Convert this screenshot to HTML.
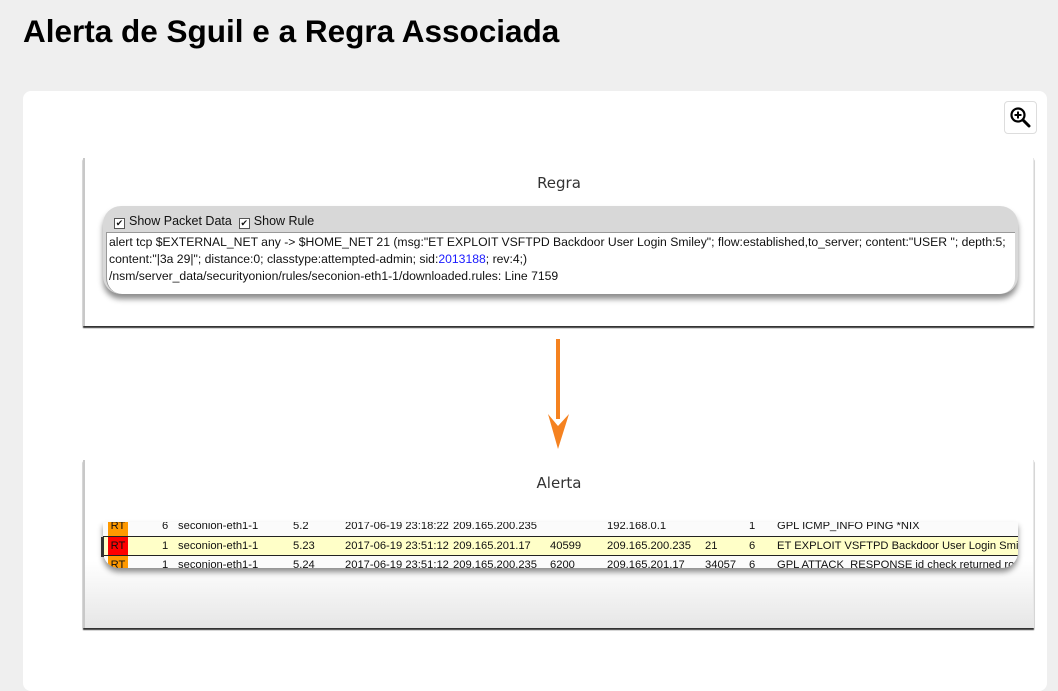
<!DOCTYPE html>
<html><head><meta charset="utf-8"><style>
body{margin:0;width:1058px;height:668px;background:#efefef;font-family:"Liberation Sans","DejaVu Sans",sans-serif;overflow:hidden;position:relative}
h1{position:absolute;left:23px;top:13px;margin:0;font-size:31.5px;font-weight:bold;color:#000}
.card{position:absolute;left:23px;top:91px;width:1024px;height:600px;background:#fff;border-radius:8px}
.zoom{position:absolute;left:1004px;top:101px;width:31px;height:31px;border:1px solid #ddd;border-radius:4px;background:#fff}
.panel{position:absolute;left:83px;width:948px;background:#fff;border-left:2px solid #c8c8c8;border-right:1px solid #e8e8e8;box-shadow:0 2px 1px #333}
.ttl{position:absolute;width:100%;text-align:center;font-family:"DejaVu Sans",sans-serif;font-size:15px;color:#333}
.sm{font-family:"Liberation Sans",sans-serif;font-size:12.2px;color:#111}
.rule{position:absolute;left:18px;top:48px;width:915px;height:88px;background:#d8d8d8;border-radius:18px;box-shadow:0 5px 6px rgba(0,0,0,.45)}
.rbox{position:absolute;left:3px;top:26px;right:3px;bottom:0;background:#fff;border-radius:0 0 16px 16px;border-top:1px solid #999;border-left:1px solid #999;padding:1px 0 0 2px;line-height:17px;white-space:nowrap;overflow:hidden}
.cb{display:inline-block;width:9px;height:9px;border:1px solid #555;background:#fff;font-size:9px;line-height:9px;text-align:center;vertical-align:-1px;margin-right:4px}
.tbl{position:absolute;left:18px;top:62px;width:915px;height:46px;overflow:hidden;border-radius:0 0 16px 16px;box-shadow:0 4px 6px rgba(0,0,0,.45);background:#fbfbfb}
.row{position:absolute;left:0;height:19px;width:100%;line-height:19px;white-space:nowrap;font-size:11.2px}
.row span{position:absolute}
</style></head><body>
<h1>Alerta de Sguil e a Regra Associada</h1>
<div class="card"></div>
<div class="zoom"><svg width="31" height="31" viewBox="0 0 31 31"><circle cx="13" cy="13" r="6.5" fill="none" stroke="#000" stroke-width="2.2"/><path d="M13 9.5v7M9.5 13h7" stroke="#000" stroke-width="2"/><path d="M18 18l6 6" stroke="#000" stroke-width="3" stroke-linecap="round"/></svg></div>

<div class="panel" style="top:158px;height:168px">
<div class="ttl" style="top:16px">Regra</div>
<div class="rule"><div class="sm" style="position:absolute;left:11px;top:8px;font-size:12.5px"><span class="cb">✔</span>Show Packet Data &nbsp;<span class="cb">✔</span>Show Rule</div>
<div class="rbox sm">alert tcp $EXTERNAL_NET any -&gt; $HOME_NET 21 (msg:"ET EXPLOIT VSFTPD Backdoor User Login Smiley"; flow:established,to_server; content:"USER "; depth:5;<br>content:"|3a 29|"; distance:0; classtype:attempted-admin; sid:<span style="color:#1a1aff">2013188</span>; rev:4;)<br>/nsm/server_data/securityonion/rules/seconion-eth1-1/downloaded.rules: Line 7159</div></div>
</div>

<svg style="position:absolute;left:545px;top:336px" width="30" height="115"><path d="M13 3v80" stroke="#f58220" stroke-width="4"/><path d="M3 78l10 35l11-35l-11 12z" fill="#f58220"/></svg>

<div class="panel" style="top:460px;height:168px;background:linear-gradient(#fff 60%,#e6e6e6)">
<div class="ttl" style="top:14px">Alerta</div>
<div class="tbl sm">
<div class="row" style="top:-5px"><span style="left:5px;width:20px;background:#f90;text-align:center">RT</span><span style="left:59px">6</span><span style="left:75px">seconion-eth1-1</span><span style="left:190px">5.2</span><span style="left:242px">2017-06-19 23:18:22</span><span style="left:350px">209.165.200.235</span><span style="left:504px">192.168.0.1</span><span style="left:646px">1</span><span style="left:674px">GPL ICMP_INFO PING *NIX</span></div>
<div class="row" style="top:14px;background:#ffffc8;border-top:1px solid #222;border-bottom:1px solid #222;height:18px;line-height:18px"><span style="left:5px;width:20px;background:#f00;text-align:center">RT</span><span style="left:59px">1</span><span style="left:75px">seconion-eth1-1</span><span style="left:190px">5.23</span><span style="left:242px">2017-06-19 23:51:12</span><span style="left:350px">209.165.201.17</span><span style="left:447px">40599</span><span style="left:504px">209.165.200.235</span><span style="left:602px">21</span><span style="left:646px">6</span><span style="left:674px">ET EXPLOIT VSFTPD Backdoor User Login Smiley</span></div>
<div class="row" style="top:34px"><span style="left:5px;width:20px;background:#f90;text-align:center">RT</span><span style="left:59px">1</span><span style="left:75px">seconion-eth1-1</span><span style="left:190px">5.24</span><span style="left:242px">2017-06-19 23:51:12</span><span style="left:350px">209.165.200.235</span><span style="left:447px">6200</span><span style="left:504px">209.165.201.17</span><span style="left:602px">34057</span><span style="left:646px">6</span><span style="left:674px">GPL ATTACK_RESPONSE id check returned root</span></div>
</div>
<div style="position:absolute;left:16px;top:77px;width:3px;height:20px;background:#333"></div>
</div>
</body></html>
